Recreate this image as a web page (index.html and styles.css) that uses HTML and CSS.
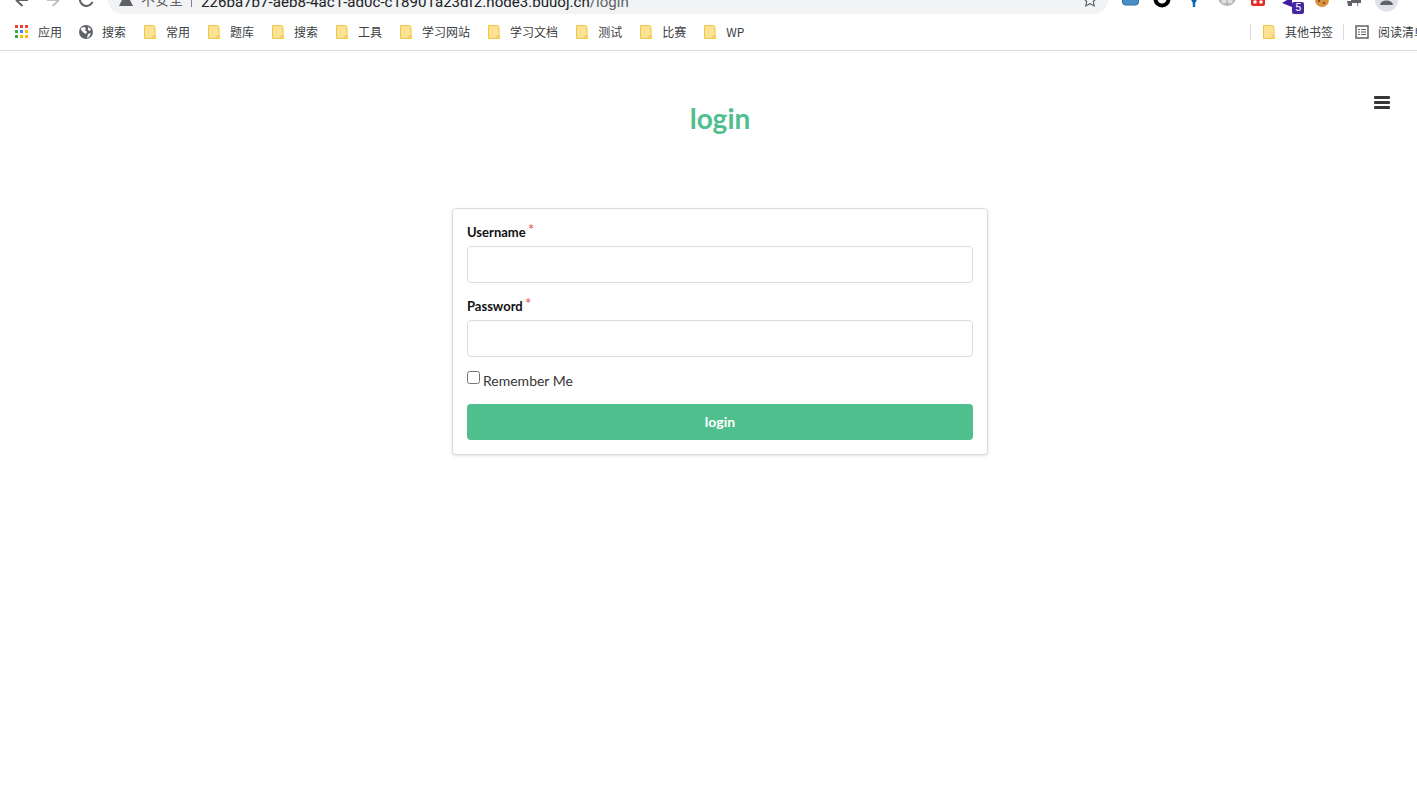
FILE: index.html
```html
<!DOCTYPE html>
<html lang="zh">
<head>
<meta charset="utf-8">
<title>login</title>
<link rel="stylesheet" href="styles.css">
</head>
<body>
<svg class="defs" width="0" height="0" aria-hidden="true">
  <symbol id="folder" viewBox="0 0 12 14">
    <path d="M.5.500h8.500a2 2 0 0 1 2 2v11H.5z" fill="#fde293" stroke="#edc748"/>
    <path d="M9 13.500v-2.500h2.500v2.500z" fill="#fde293" stroke="#edc748"/>
  </symbol>
</svg>
<header class="chrome">
  <div class="toolbar">
    <svg class="nav nav-back" width="14" height="14" viewBox="0 0 14 14"><path d="M14 0H2M2 0l6.500 6" fill="none" stroke="#5f6368" stroke-width="2"/></svg>
    <svg class="nav nav-forward" width="14" height="14" viewBox="0 0 14 14"><path d="M0 0h12M12 0L5.500 6" fill="none" stroke="#bdc1c6" stroke-width="2"/></svg>
    <svg class="nav nav-reload" width="15" height="14" viewBox="0 0 15 14"><path d="M13.500 1.800A6.500 6.500 0 1 1 1.400 -3" fill="none" stroke="#5f6368" stroke-width="2"/></svg>
    <div class="omnibox">
      <svg class="warn" width="16" height="14" viewBox="0 0 16 14"><path d="M8-8L15 6H1z" fill="#5f6368"/></svg>
      <span class="insecure">不安全</span>
      <span class="divider"></span>
      <span class="url">226ba7b7-aeb8-4ac1-ad0c-c18901a23df2.node3.buuoj.cn<span class="url-path">/login</span></span>
      <svg class="star" width="14" height="14" viewBox="0 0 14 14"><path d="M7-7l2 4.600 4.800.6-3.500 3.300.9 4.500L7 3.800 2.800 6l.9-4.500L.2-1.800 5-2.400z" fill="none" stroke="#5f6368" stroke-width="1.200"/></svg>
    </div>
    <div class="extensions">
      <svg class="ext ext-blue" width="18" height="14" viewBox="0 0 18 14"><path d="M.5-2h16v4a3 3 0 0 1-3 3h-10a3 3 0 0 1-3-3z" fill="#4a90c8" stroke="#2f6f9f"/></svg>
      <svg class="ext ext-ring" width="18" height="14" viewBox="0 0 18 14"><circle cx="9" cy="-1" r="6.500" fill="none" stroke="#000" stroke-width="4"/></svg>
      <svg class="ext ext-pin" width="12" height="14" viewBox="0 0 12 14"><path d="M1-2h8L6.200 3V7h-2.400V3z" fill="#0a66b0"/></svg>
      <svg class="ext ext-grey" width="18" height="14" viewBox="0 0 18 14"><circle cx="9" cy="-3" r="9" fill="#b5b5b5"/><circle cx="6" cy="1" r="2.500" fill="#e0e0e0"/><circle cx="12" cy="1" r="2.500" fill="#e0e0e0"/></svg>
      <svg class="ext ext-red" width="16" height="14" viewBox="0 0 16 14"><rect x="0" y="-4" width="14" height="10" rx="2" fill="#e02b20"/><circle cx="4" cy="2" r="1.800" fill="#fff"/><circle cx="10" cy="2" r="1.800" fill="#fff"/></svg>
      <div class="ext ext-badged">
        <svg width="22" height="14" viewBox="0 0 22 14"><path d="M0 3l10-6V7z" fill="#3f1d9b"/></svg>
        <span class="badge">5</span>
      </div>
      <svg class="ext ext-cookie" width="16" height="14" viewBox="0 0 16 14"><circle cx="7" cy="0" r="7" fill="#d9913f"/><circle cx="4" cy="1" r="1.100" fill="#7a4415"/><circle cx="9" cy="3" r="1.100" fill="#7a4415"/><circle cx="10" cy="-1" r="1.100" fill="#7a4415"/></svg>
      <svg class="ext ext-puzzle" width="16" height="14" viewBox="0 0 16 14"><path d="M0 1h4V-2h5v2h5v3h-2a1.500 1.500 0 0 0 0 3h-2V3H5v3H1z" fill="#5f6368"/></svg>
      <svg class="ext ext-avatar" width="23" height="14" viewBox="0 0 23 14"><circle cx="11.500" cy="0" r="11.500" fill="#dee1e6"/><path d="M5 5a6.500 4.500 0 0 1 13 0z" fill="#5f6368"/></svg>
    </div>
  </div>
  <nav class="bookmarks">
    <a class="bookmark bookmark-apps">
      <svg class="apps-icon" width="14" height="14" viewBox="0 0 14 14">
        <rect x="0" y="0" width="3" height="3" fill="#ea4335"/><rect x="5" y="0" width="3" height="3" fill="#ea4335"/><rect x="10" y="0" width="3" height="3" fill="#ea4335"/>
        <rect x="0" y="5" width="3" height="3" fill="#34a853"/><rect x="5" y="5" width="3" height="3" fill="#4285f4"/><rect x="10" y="5" width="3" height="3" fill="#fbbc04"/>
        <rect x="0" y="10" width="3" height="3" fill="#34a853"/><rect x="5" y="10" width="3" height="3" fill="#fbbc04"/><rect x="10" y="10" width="3" height="3" fill="#fbbc04"/>
      </svg>应用</a>
    <a class="bookmark">
      <svg class="icon-globe" width="14" height="14" viewBox="0 0 14 14"><circle cx="7" cy="7" r="7" fill="#5f6368"/><path d="M2 3l3-1 2 1-1 2 2 2-1 2-2-1-3-3zM9 2l3 2-1 2-2-1zM9 9l3-1-2 4-2 1z" fill="#fff"/></svg>搜索</a>
    <a class="bookmark"><svg class="folder" width="12" height="14"><use href="#folder"/></svg>常用</a>
    <a class="bookmark"><svg class="folder" width="12" height="14"><use href="#folder"/></svg>题库</a>
    <a class="bookmark"><svg class="folder" width="12" height="14"><use href="#folder"/></svg>搜索</a>
    <a class="bookmark"><svg class="folder" width="12" height="14"><use href="#folder"/></svg>工具</a>
    <a class="bookmark"><svg class="folder" width="12" height="14"><use href="#folder"/></svg>学习网站</a>
    <a class="bookmark"><svg class="folder" width="12" height="14"><use href="#folder"/></svg>学习文档</a>
    <a class="bookmark"><svg class="folder" width="12" height="14"><use href="#folder"/></svg>测试</a>
    <a class="bookmark"><svg class="folder" width="12" height="14"><use href="#folder"/></svg>比赛</a>
    <a class="bookmark"><svg class="folder" width="12" height="14"><use href="#folder"/></svg>WP</a>
    <div class="bookmarks-right">
      <span class="bar-sep"></span>
      <a class="bookmark"><svg class="folder" width="12" height="14"><use href="#folder"/></svg>其他书签</a>
      <span class="bar-sep bar-sep-second"></span>
      <a class="bookmark bookmark-reading">
        <svg class="list-icon" width="14" height="14" viewBox="0 0 14 14"><path d="M1 1h12v12H1z" fill="none" stroke="#5f6368" stroke-width="1.500"/><path d="M3 4.500h2M6 4.500h5M3 7h2M6 7h5M3 9.500h2M6 9.500h5" stroke="#5f6368"/></svg>阅读清单</a>
    </div>
  </nav>
</header>
<main class="page">
  <button class="menu-toggle" type="button" aria-label="menu">
    <span></span><span></span><span></span>
  </button>
  <h1 class="title">login</h1>
  <form class="card">
    <div class="field">
      <label class="label">Username<sup class="req">*</sup></label>
      <input class="input" type="text">
    </div>
    <div class="field field-last">
      <label class="label">Password<sup class="req">*</sup></label>
      <input class="input" type="password">
    </div>
    <div class="remember">
      <input class="check" type="checkbox" id="remember"><label for="remember">Remember Me</label>
    </div>
    <button class="submit" type="button">login</button>
  </form>
</main>
</body>
</html>
```

FILE: styles.css
```css
* { box-sizing: border-box; }
html, body { margin: 0; padding: 0; background: #fff; }
body { font-family: Lato, "Noto Sans", sans-serif; color: #363636; overflow: hidden; height: 800px; }
.defs { position: absolute; }

.chrome { height: 51px; border-bottom: 1px solid #dadce0; background: #fff; overflow: hidden; }

.toolbar { height: 14px; display: flex; align-items: flex-start; overflow: hidden; }
.nav { flex: none; display: block; }
.nav-back { margin-left: 14px; }
.nav-forward { margin-left: 19px; }
.nav-reload { margin-left: 18px; }
.omnibox {
  flex: none; width: 1000px; height: 14px; margin-left: 14px;
  background: #f1f3f4; border-radius: 0 0 14px 14px;
  display: flex; align-items: flex-end; position: relative;
  font-family: Roboto, "Noto Sans CJK SC", sans-serif; overflow: hidden;
}
.warn { position: absolute; left: 10px; top: 0; }
.insecure { position: absolute; left: 33px; bottom: 4px; font-size: 14px; line-height: 20px; color: #5f6368; }
.divider { position: absolute; left: 83px; top: 0; width: 1px; height: 7px; background: #80868b; }
.url { position: absolute; left: 93px; bottom: 2px; font-size: 15.100px; line-height: 20px; color: #202124; white-space: nowrap; }
.url-path { color: #5f6368; }
.star { position: absolute; left: 975px; top: 0; }

.extensions { flex: none; display: flex; align-items: flex-start; margin-left: 14px; }
.ext { display: block; flex: none; }
.ext-ring { margin-left: 13px; }
.ext-pin { margin-left: 18px; }
.ext-grey { margin-left: 17px; }
.ext-red { margin-left: 15px; }
.ext-badged { margin-left: 15px; position: relative; width: 22px; height: 14px; }
.ext-badged svg { display: block; }
.ext-cookie { margin-left: 11px; }
.ext-puzzle { margin-left: 16px; }
.ext-avatar { margin-left: 12px; }
.badge {
  position: absolute; left: 10px; top: 2px; width: 12px; height: 12px;
  background: #4527a0; color: #fff; border-radius: 2px;
  font: 11px/12px Roboto, sans-serif; text-align: center;
}

.bookmarks {
  height: 36px; display: flex; align-items: center; padding-left: 15px;
  font-family: "Noto Sans CJK SC", Roboto, sans-serif; font-size: 12px; color: #3c4043;
  white-space: nowrap;
}
.bookmark { display: flex; align-items: center; margin-right: 18px; line-height: 16px; }
.bookmark svg { flex: none; margin-right: 10px; }
.bookmark-apps { margin-right: 17px; }
.apps-icon { margin-right: 9px !important; }
.icon-globe { margin-right: 9px !important; }
.bookmarks-right { margin-left: auto; display: flex; align-items: center; flex: none; width: 167px; overflow: hidden; }
.bar-sep { flex: none; width: 1px; height: 16px; background: #dadce0; margin-right: 12px; }
.bar-sep-second { margin-right: 11px; margin-left: -8px; }
.bookmark-reading { margin-right: 0; }
.list-icon { margin-right: 9px !important; }

.page { position: relative; padding-left: 23px; display: flex; flex-direction: column; align-items: center; }
.menu-toggle {
  position: absolute; left: 1374px; top: 45px; width: 16px; height: 13px;
  padding: 0; border: 0; background: none; display: flex; flex-direction: column; justify-content: space-between;
}
.menu-toggle span { display: block; height: 3px; background: #363636; border-radius: 1px; }
.title {
  margin: 49px 0 0; font-size: 28px; line-height: 36px; font-weight: 700; color: #4fc08d; text-align: center;
}
.card {
  margin-top: 72px; width: 536px; height: 247px; padding: 14px;
  border: 1px solid #dbdbdb; border-radius: 4px; box-shadow: 0 1px 3px rgba(10, 10, 10, .12);
  background: #fff;
}
.field { margin-bottom: 14px; }
.field-last { margin-bottom: 11px; }
.label { display: block; font-size: 13px; font-weight: 700; line-height: 18px; color: #111; margin-bottom: 5px; height: 18px; }
.req { color: #e8505b; font-size: 16px; font-weight: 400; line-height: 0; margin-left: 2px; position: relative; top: 3px; vertical-align: super; }
.input {
  display: block; width: 100%; height: 37px; padding: 0 10px; border: 1px solid #dbdbdb; border-radius: 4px;
  background: #fff; outline: none; font: 14px Lato, sans-serif;
}
.remember { display: flex; align-items: flex-start; height: 26px; font-size: 14px; line-height: 22px; color: #363636; }
.check { width: 13px; height: 13px; margin: 3px 3px 0 0; flex: none; }
.remember label { margin-top: 2px; }
.submit {
  display: block; width: 100%; height: 36px; margin-top: 10px; padding: 0 0 2px; border: 0; border-radius: 4px;
  background: #4fc08d; color: #fff; font: 700 14px Lato, sans-serif; text-align: center;
}
```
